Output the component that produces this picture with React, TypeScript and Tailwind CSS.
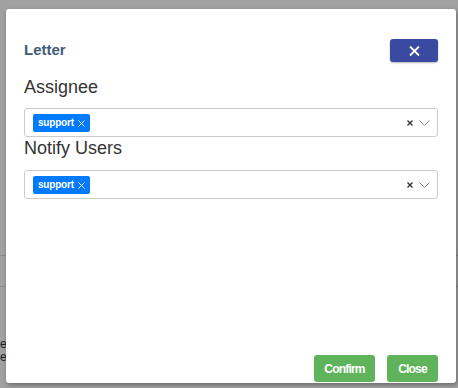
function Chip() {
  return (
    <span className="inline-flex h-[18px] items-center gap-[4px] rounded-[2px] bg-[#007bff] pl-[5px] pr-[5px] text-[10px] font-bold tracking-[-0.2px] text-white">
      support
      <svg width="7" height="7" viewBox="0 0 7 7" className="mt-[1px]">
        <path d="M0.5 0.5L6.5 6.5M6.5 0.5L0.5 6.5" stroke="white" strokeWidth="1" />
      </svg>
    </span>
  );
}

function MultiSelect() {
  return (
    <div className="flex h-[29px] items-center rounded-[3px] border border-[#cccccc] bg-white pl-[8px] pr-[7px]">
      <Chip />
      <div className="ml-auto flex items-center gap-[6px]">
        <svg width="6" height="6" viewBox="0 0 6 6">
          <path d="M0.5 0.5L5.5 5.5M5.5 0.5L0.5 5.5" stroke="#333" strokeWidth="1.4" />
        </svg>
        <svg width="11" height="6" viewBox="0 0 11 6" className="mt-[1px]">
          <path d="M0.5 0.5L5.5 5.5L10.5 0.5" stroke="#8a8a8a" strokeWidth="1" fill="none" />
        </svg>
      </div>
    </div>
  );
}

export default function App() {
  return (
    <div
      className="relative h-[388px] w-[458px] overflow-hidden bg-[#a1a1a1]"
      style={{ fontFamily: '"Liberation Sans", Arial, sans-serif' }}
    >
      {/* page behind the overlay */}
      <div aria-hidden className="absolute inset-0">
        <div className="absolute left-0 right-0 top-[255px] h-px bg-[#8a8a8a]" />
        <div className="absolute left-0 right-0 top-[286px] h-px bg-[#8a8a8a]" />
        <div className="absolute left-[-4px] top-[338px] text-[12px] leading-[13px] text-[#1c1c1c]">
          <div>re</div>
          <div className="pl-[4px]">e</div>
        </div>
      </div>

      {/* modal */}
      <div className="absolute left-[6px] top-[9px] flex h-[374px] w-[450px] flex-col rounded-[3px] bg-white px-[18px] pb-[1px] pt-[30px] shadow-[1px_2px_4px_rgba(0,0,0,0.35)]">
        <div className="flex h-[23px] items-center justify-between">
          <span className="text-[15px] font-bold text-[#3f5d7b]">Letter</span>
          <button className="flex h-[23px] w-[48px] items-center justify-center rounded-[3px] bg-[#3b4aa1] shadow-[0_1px_2px_rgba(0,0,0,0.3)]">
            <svg width="11" height="10" viewBox="0 0 11 10">
              <path d="M1 0.5L10 9.5M10 0.5L1 9.5" stroke="white" strokeWidth="1.8" />
            </svg>
          </button>
        </div>

        <div className="mt-[14px] text-[18px] leading-[22px] text-[#333333]">Assignee</div>
        <div className="mt-[10px]">
          <MultiSelect />
        </div>

        <div className="text-[18px] leading-[22px] text-[#333333]">Notify Users</div>
        <div className="mt-[11px]">
          <MultiSelect />
        </div>

        <div className="mt-auto flex justify-end gap-[12px]">
          <button className="h-[27px] w-[61px] rounded-[3px] bg-[#5fb35b] text-[12px] font-bold tracking-[-0.8px] text-white">
            Confirm
          </button>
          <button className="h-[27px] w-[51px] rounded-[3px] bg-[#5fb35b] text-[12px] font-bold tracking-[-0.8px] text-white">
            Close
          </button>
        </div>
      </div>
    </div>
  );
}
